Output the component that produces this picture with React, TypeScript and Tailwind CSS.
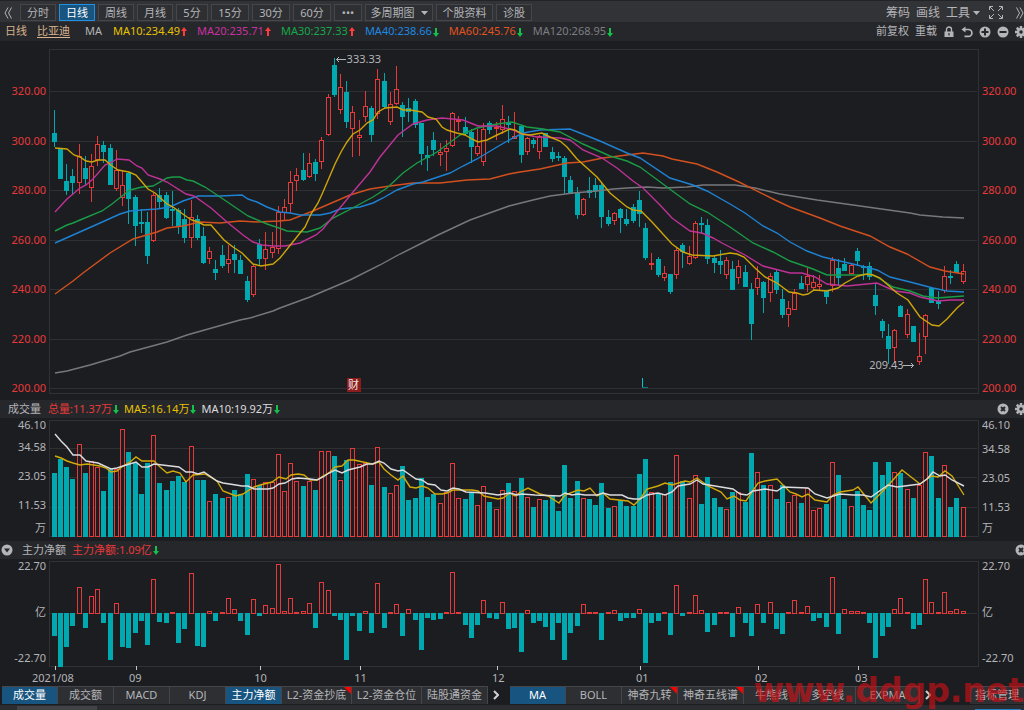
import React from 'react'
import clsx from 'clsx'

// [high, body top, body bottom, low, 1 = rising / 0 = falling]
const candles = [
  [110,133,141,146,0],[148,148,178,178,0],[164,181,190,194,0],[169,176,182,194,0],[144,156,182,193,1],
  [156,168,178,184,0],[154,166,187,201,1],[136,144,159,165,1],[141,145,151,162,0],[144,148,184,184,0],
  [150,170,188,190,1],[171,185,197,205,1],[172,173,198,223,0],[195,197,225,245,0],[209,222,223,232,0],
  [212,222,255,263,0],[193,195,240,241,1],[188,195,201,207,0],[192,195,217,218,0],[191,209,210,225,0],
  [208,210,226,233,0],[209,219,237,242,0],[200,217,237,247,1],[215,219,237,239,0],[227,236,262,263,0],
  [247,251,258,263,1],[260,269,272,279,0],[245,255,265,267,0],[245,259,263,272,1],[245,254,259,272,0],
  [255,260,273,273,0],[276,281,299,301,0],[265,266,294,296,1],[239,244,258,264,0],[232,249,258,269,1],
  [232,247,252,257,1],[206,212,248,253,1],[199,207,212,219,1],[171,182,203,212,1],[168,175,180,190,1],
  [153,170,179,180,0],[153,163,176,177,1],[159,162,173,180,0],[137,140,161,168,1],[94,97,134,135,1],
  [58,65,94,96,0],[74,87,109,113,1],[81,92,121,127,0],[106,112,128,156,1],[120,135,137,155,1],
  [91,106,116,121,1],[106,108,134,141,0],[69,79,113,118,1],[73,81,106,108,0],[92,104,121,124,1],
  [66,89,103,104,1],[102,105,116,136,0],[98,108,111,121,0],[99,101,124,127,0],[123,123,153,164,0],
  [146,155,157,170,0],[132,140,149,155,0],[143,152,154,165,1],[140,148,151,170,1],[112,113,145,146,1],
  [116,120,121,130,1],[117,127,133,134,0],[129,132,146,162,0],[129,146,153,155,1],[123,129,161,165,1],
  [121,123,129,133,0],[122,127,128,139,1],[105,119,129,133,1],[116,122,124,142,0],[112,136,138,138,1],
  [125,126,154,162,0],[137,138,151,154,1],[138,140,143,147,0],[135,136,151,158,1],[133,133,146,146,0],
  [147,152,158,161,0],[152,156,157,160,0],[156,158,176,193,0],[176,180,193,193,0],[187,192,214,218,0],
  [198,199,214,215,1],[177,190,192,197,0],[178,185,190,197,0],[183,185,216,227,0],[210,217,223,225,0],
  [212,213,220,224,1],[208,209,217,232,0],[209,219,223,225,0],[204,207,220,222,0],[191,200,213,226,0],
  [223,228,257,259,0],[253,263,264,269,1],[257,259,274,276,0],[266,273,277,280,1],[274,274,291,293,0],
  [248,250,274,278,1],[243,245,251,267,0],[246,256,263,264,1],[221,223,257,258,1],[217,223,224,233,0],
  [219,225,258,263,0],[255,258,262,272,0],[250,261,264,273,0],[257,260,274,278,1],[261,269,289,289,0],
  [260,266,277,283,1],[265,272,286,286,0],[283,289,323,339,0],[266,278,287,294,1],[281,282,297,312,0],
  [273,276,292,301,1],[269,272,289,293,0],[289,299,314,317,0],[301,308,314,326,1],[289,293,309,309,1],
  [276,283,288,288,0],[268,276,284,291,1],[275,282,287,289,1],[275,284,286,290,1],[290,291,296,303,0],
  [257,260,285,291,1],[259,268,277,285,0],[258,264,270,270,0],[264,265,273,273,1],[248,251,260,265,0],
  [265,266,267,279,0],[262,266,276,279,0],[284,295,305,314,0],[319,321,330,337,0],[324,336,348,363,0],
  [329,330,347,362,1],[305,306,316,316,0],[309,314,334,337,1],[326,326,341,341,0],[333,356,361,364,1],
  [314,315,336,353,1],[287,288,302,302,0],[291,301,303,308,0],[266,276,290,292,1],[270,276,277,283,0],
  [261,264,272,272,0],[264,271,281,283,1],
]

const volumes = [
  473,459,467,479,444,473,461,467,491,469,469,429,452,463,494,463,435,483,490,481,476,482,446,480,480,
  501,494,498,497,490,494,474,479,485,482,482,454,491,463,481,486,481,490,451,451,456,480,460,448,464,
  463,485,447,487,493,485,466,500,498,478,497,494,503,492,463,498,499,492,505,486,502,509,490,483,491,
  478,497,507,499,500,496,511,465,498,481,498,499,505,483,508,506,500,506,506,474,459,492,494,494,482,
  455,481,498,475,504,477,498,507,509,492,492,502,453,472,485,485,499,485,502,495,503,488,510,508,504,
  462,475,499,506,491,505,510,462,475,462,472,473,489,498,485,452,456,498,465,507,498,507,
]

const flows = [
  635,666,646,625,587,627,596,589,622,659,603,646,647,632,620,644,579,621,622,612,642,628,573,645,646,
  611,620,612,598,609,620,634,599,615,605,608,564,611,598,612,611,603,627,582,590,615,619,659,615,630,
  611,632,583,627,612,604,635,609,619,649,617,619,618,612,572,612,624,637,624,600,617,618,602,628,627,
  651,610,622,620,626,639,622,659,632,625,604,612,612,639,612,610,620,617,617,609,662,622,620,612,634,
  585,615,612,595,610,631,624,612,612,636,607,622,635,604,622,602,628,633,612,600,612,606,620,617,626,
  577,633,609,611,611,612,622,657,635,626,609,598,612,628,624,579,602,612,592,611,609,611,
]

const priceLines = [
  { color: '#77787b', points: '55,373 67,371 90,365 120,356 130,352 167,342 187,335 240,320 250,318 273,311 280,308 310,297 350,280 380,265 400,254 430,239 438,235 470,220 509,206 517,204 533,200 550,196 573,193 597,191 613,189 627,188 647,187 663,188 687,187 703,185 735,185 755,188 780,194 817,200 853,205 910,213 920,215 943,217 964,218' },
  { color: '#d2501e', points: '55,294 73,281 83,273 110,253 133,239 157,232 167,228 183,226 200,222 220,223 240,221 257,222 279,221 290,220 313,211 350,195 370,189 390,186 413,183 440,183 467,180 490,179 509,174 520,172 540,169 567,163 583,162 603,158 627,155 643,153 663,156 672,159 697,164 717,172 739,182 775,200 790,207 820,218 840,226 870,236 890,247 907,254 930,267 945,271 964,274' },
  { color: '#1e82d2', points: '55,243 100,223 120,214 130,211 142,210 157,209 170,207 183,201 198,196 220,196 242,195 248,199 257,202 267,207 280,212 290,213 300,215 320,215 330,213 340,209 360,207 373,203 383,198 397,190 413,184 423,182 450,173 463,166 477,159 497,147 509,140 523,133 540,130 570,129 580,133 600,141 627,153 640,158 670,178 693,185 707,191 730,204 745,213 763,226 777,233 790,242 807,251 823,257 857,265 877,270 890,277 910,282 933,288 947,291 964,292' },
  { color: '#1a9b46', points: '55,231 67,225 73,223 80,220 102,211 112,204 122,196 130,190 142,187 153,186 167,178 173,177 180,177 187,180 193,181 205,187 220,197 248,216 267,224 279,228 287,231 307,232 320,228 333,218 347,211 360,204 373,197 387,188 403,173 417,163 437,152 460,135 477,128 497,124 512,122 527,127 543,129 560,132 583,144 610,156 627,161 640,167 667,187 690,204 707,212 730,227 753,243 773,252 790,261 813,269 827,275 857,275 870,274 877,277 893,287 910,291 923,296 937,298 950,297 964,296' },
  { color: '#be3296', points: '55,212 67,199 73,194 80,188 86,185 93,179 105,165 112,162 117,159 129,160 137,166 142,168 148,175 160,179 167,182 186,194 194,196 204,203 211,208 227,222 243,235 253,242 262,245 273,246 285,246 300,243 316,235 323,229 335,214 353,192 370,172 380,157 398,135 413,124 427,120 442,118 463,120 478,126 497,126 513,130 522,134 537,137 560,138 570,140 583,150 602,158 617,168 633,181 643,188 660,205 672,218 690,231 702,233 713,238 722,243 745,255 763,266 790,273 802,273 815,277 827,284 847,286 877,283 895,291 910,293 920,297 938,301 950,300 964,300' },
  { color: '#cda50a', points: '55,148 67,149 74,155 80,157 86,161 92,162 98,160 105,160 112,166 118,170 129,172 136,175 142,182 148,189 155,193 167,204 173,207 180,212 187,217 192,220 198,222 204,225 211,225 217,232 224,240 233,247 242,253 253,264 261,266 273,264 280,258 300,233 305,227 311,214 318,203 323,192 329,178 335,164 341,152 347,142 353,134 360,130 367,123 373,120 378,112 385,108 397,107 403,110 410,110 422,112 428,117 436,119 442,127 447,130 457,133 465,135 472,139 478,142 487,140 497,135 510,129 515,130 522,134 530,135 542,133 550,137 560,141 567,147 577,159 597,177 610,193 627,207 633,210 641,211 652,222 672,244 683,252 692,255 713,256 730,253 737,254 744,257 755,268 765,277 777,283 789,292 797,293 803,295 808,294 814,290 827,291 838,288 845,283 858,276 867,274 873,275 880,278 888,285 897,293 908,300 920,317 932,325 939,326 947,319 957,308 964,302' },
]

const volumeLines = [
  { color: '#d2aa0a', points: '55,456 61,458 67,461 73,463 80,465 87,464 100,466 106,468 111,472 117,471 123,466 129,463 136,457 142,461 154,461 160,467 167,473 173,471 180,473 186,482 193,475 205,474 217,481 223,491 236,496 243,494 254,487 260,485 272,482 279,477 286,479 291,475 298,474 304,475 310,480 317,480 323,476 329,473 335,467 342,466 348,460 354,460 372,464 379,462 384,469 391,475 398,480 403,476 410,487 416,488 422,486 428,488 435,494 442,494 447,493 453,490 472,490 478,491 484,496 498,499 503,498 510,493 515,496 522,491 528,488 540,494 548,496 559,503 565,495 578,490 584,491 590,488 597,496 603,493 610,499 628,501 634,505 640,499 647,489 658,486 665,483 672,485 685,481 690,482 697,478 708,486 721,492 727,499 734,496 740,500 746,501 758,483 765,481 777,479 790,492 796,494 802,497 808,494 815,500 827,502 833,495 840,492 853,490 858,487 871,503 883,491 902,470 920,484 927,479 932,476 938,477 945,471 952,476 964,495' },
  { color: '#dcdcde', points: '55,434 61,441 67,447 73,455 80,455 86,461 98,463 111,469 117,468 123,466 136,462 142,467 148,467 154,464 179,467 186,472 192,472 198,474 204,472 217,481 223,483 236,485 242,486 248,486 254,489 268,489 273,488 279,484 285,483 292,479 298,478 310,479 317,480 323,477 329,473 335,470 342,473 348,470 360,467 367,464 373,464 379,461 384,463 391,469 398,471 403,470 416,479 422,480 428,484 435,485 441,490 447,491 453,488 459,489 466,492 485,493 498,495 510,493 517,495 522,494 535,495 560,496 565,493 572,495 578,494 585,495 597,495 603,493 610,495 622,495 628,498 634,499 640,499 647,495 658,493 665,495 672,492 678,486 690,484 697,480 703,484 715,486 733,489 740,494 747,495 753,491 765,489 777,491 783,487 808,488 815,494 827,498 840,494 853,495 863,495 871,497 888,485 897,487 920,484 927,479 933,472 940,476 945,475 952,480 964,486' },
]

const UP = '#e63a3a'
const DOWN = '#00a8b0'
const GRID = '#2f3034'
const ZERO = 613

const barX = (i: number) => Math.round(51.6 + i * 6.226)

const Arrow = ({ up = false }: { up?: boolean }) => (
  <svg viewBox="0 0 6 10" className={clsx('w-[6px] h-[10px] ml-px shrink-0', up ? 'text-[#ff3b3b]' : 'text-[#12c24a] rotate-180')} aria-hidden="true">
    <path d="M3 0 6 4H4V9H2V4H0Z" fill="currentColor" />
  </svg>
)

const Gear = () => (
  <svg viewBox="0 0 24 24" className="w-3 h-3" aria-hidden="true">
    <g stroke="currentColor" strokeWidth="5">
      <path d="M12 0V24M0 12H24M3.5 3.5 20.5 20.5M20.5 3.5 3.5 20.5" />
    </g>
    <circle cx="12" cy="12" r="8" fill="currentColor" />
    <circle cx="12" cy="12" r="3.5" fill="#26272b" />
  </svg>
)

const Disc = ({ d, fill }: { d: string; fill?: boolean }) => (
  <svg viewBox="0 0 12 12" className="w-3 h-3" aria-hidden="true">
    <circle cx="6" cy="6" r="5.5" fill="currentColor" />
    <path d={d} fill={fill ? '#26272b' : 'none'} stroke="#26272b" strokeWidth={fill ? 0 : 2} />
  </svg>
)

const IconButton = ({ label, className, children }: { label: string; className?: string; children: React.ReactNode }) => (
  <button type="button" aria-label={label} className={clsx('flex items-center justify-center shrink-0', className)}>
    {children}
  </button>
)

const Lines = ({ lines }: { lines: { color: string; points: string }[] }) => (
  <>
    {lines.map((line) => (
      <polyline key={line.color} points={line.points} fill="none" stroke={line.color} strokeWidth="1.4" />
    ))}
  </>
)

const Bar = ({ x, top, bottom, up }: { x: number; top: number; bottom: number; up: boolean }) =>
  up ? (
    <rect x={x + 0.5} y={top + 0.5} width={4} height={Math.max(bottom - top - 1, 1)} fill="#1c1d21" stroke={UP} />
  ) : (
    <rect x={x} y={top} width={5} height={Math.max(bottom - top, 1)} fill={DOWN} />
  )

const periods = [
  { label: '分时', width: 'w-9' },
  { label: '日线', width: 'w-9', active: true },
  { label: '周线', width: 'w-9' },
  { label: '月线', width: 'w-9' },
  { label: '5分', width: 'w-8' },
  { label: '15分', width: 'w-[38px]' },
  { label: '30分', width: 'w-[38px]' },
  { label: '60分', width: 'w-[38px]' },
  { label: '•••', width: 'w-7' },
  { label: '多周期图', width: 'w-[68px]', menu: true },
  { label: '个股资料', width: 'w-[57px]' },
  { label: '诊股', width: 'w-9' },
]

const averages = [
  { text: 'MA10:234.49', color: 'text-[#e6c200]', up: true },
  { text: 'MA20:235.71', color: 'text-[#c832a0]', up: true },
  { text: 'MA30:237.33', color: 'text-[#18a84a]', up: true },
  { text: 'MA40:238.66', color: 'text-[#1e88e0]', up: false },
  { text: 'MA60:245.76', color: 'text-[#e0531e]', up: false },
  { text: 'MA120:268.95', color: 'text-[#7d7e82]', up: false },
]

const months = [
  { label: '09', sessions: 20 },
  { label: '10', sessions: 16 },
  { label: '11', sessions: 22 },
  { label: '12', sessions: 23 },
  { label: '01', sessions: 19 },
  { label: '02', sessions: 16 },
  { label: '03', sessions: 27 },
]

const subTabs = [
  { label: '成交量', width: 'w-14', active: true },
  { label: '成交额', width: 'w-14' },
  { label: 'MACD', width: 'w-14' },
  { label: 'KDJ', width: 'w-14' },
  { label: '主力净额', width: 'w-14', active: true },
  { label: 'L2-资金抄底', width: 'w-[70px]', isNew: true },
  { label: 'L2-资金仓位', width: 'w-[70px]' },
  { label: '陆股通资金', width: 'w-[66px]' },
]

const mainTabs = [
  { label: 'MA', width: 'w-14', active: true },
  { label: 'BOLL', width: 'w-14' },
  { label: '神奇九转', width: 'w-14', isNew: true },
  { label: '神奇五线谱', width: 'w-[66px]', isNew: true },
  { label: '牛熊线', width: 'w-14' },
  { label: '多空线', width: 'w-14' },
  { label: 'EXPMA', width: 'w-16' },
]

type TabItem = { label: string; width: string; active?: boolean; isNew?: boolean }

const Tabs = ({ items }: { items: TabItem[] }) => (
  <>
    {items.map((tab) => (
      <button
        key={tab.label}
        type="button"
        className={clsx(
          'relative h-[18px] shrink-0 border-r border-t border-[#45464a] text-center whitespace-nowrap',
          tab.width,
          tab.active ? 'bg-[#17547f] text-white' : 'bg-[#2e2f33] text-[#b4b5b8]'
        )}
      >
        {tab.label}
        {tab.isNew && (
          <svg viewBox="0 0 7 7" className="absolute top-0 right-0 w-[7px] h-[7px]" aria-hidden="true">
            <path d="M0 0H7V7Z" fill="#ff0000" />
          </svg>
        )}
      </button>
    ))}
    <IconButton label="更多指标" className="w-4 h-[18px] text-[#d0d0d2]">
      <svg viewBox="0 0 6 10" className="w-[6px] h-[10px]" aria-hidden="true">
        <path d="M1 1 5 5 1 9" fill="none" stroke="currentColor" strokeWidth="2" />
      </svg>
    </IconButton>
  </>
)

const prices = ['320.00', '300.00', '280.00', '260.00', '240.00', '220.00', '200.00']

const PriceChart = () => (
  <section className="grid grid-cols-[49px_1fr_45px] h-[357px] text-[#e63a3a]">
    <div className="flex flex-col justify-between items-end pt-[42px] pb-[2px] pr-[3px] leading-4">
      {prices.map((price) => <span key={price}>{price}</span>)}
    </div>
    <div className="relative">
      <svg viewBox="49 41 930 357" preserveAspectRatio="none" className="block w-full h-[357px]" role="img" aria-label="日线K线图">
        <path d="M49 49.5H978M49 393.5H978M49.5 49V394M978.5 49V394" stroke="#303135" fill="none" />
        {[91, 141, 190, 240, 289, 339, 388].map((y) => (
          <path key={y} d={`M50 ${y + 0.5}H977`} stroke={GRID} />
        ))}
        {candles.map(([high, top, bottom, low, up], i) => (
          <g key={i}>
            <path d={`M${barX(i) + 2.5} ${high}V${low + 1}`} stroke={up ? UP : DOWN} />
            <Bar x={barX(i)} top={top} bottom={bottom + 1} up={up === 1} />
          </g>
        ))}
        <Lines lines={priceLines} />
        <path d="M346 59.5H336.5M339 57 336.5 59.5 339 62M903 365.5H913.5M911 363 913.5 365.5 911 368" fill="none" stroke="#b4b5b8" />
        <path d="M642.5 378V388" stroke="#00c8d2" />
        <path d="M642 387.5H648" stroke="#0a7a80" />
      </svg>
      <span className="absolute top-[10px] left-[32%] leading-4 text-[#b4b5b8]">333.33</span>
      <span className="absolute top-[316px] right-[8.1%] leading-4 text-[#b4b5b8]">209.43</span>
      <button type="button" className="absolute top-[337px] left-[32%] w-[14px] h-[14px] leading-[14px] bg-[#8c1c1c] text-[#f0e6e6]">财</button>
    </div>
    <div className="flex flex-col justify-between pt-[42px] pb-[2px] pl-[3px] leading-4">
      {prices.map((price) => <span key={price}>{price}</span>)}
    </div>
  </section>
)

const VolumeChart = () => (
  <section className="grid grid-cols-[49px_1fr_45px] h-[123px] text-[#b4b5b8]">
    <div className="flex flex-col items-end pr-[3px] leading-4">
      <span className="leading-[14px]">46.10</span>
      <span className="mt-[7px]">34.58</span>
      <span className="mt-[13px]">23.05</span>
      <span className="mt-[13px]">11.53</span>
      <span className="mt-[7px]">万</span>
    </div>
    <svg viewBox="49 418 930 123" preserveAspectRatio="none" className="block w-full h-[123px]" role="img" aria-label="成交量">
      <path d="M49 420.5H978M49 536.5H978M49.5 420V537M978.5 420V537" stroke="#303135" fill="none" />
      <path d="M50 448.5H977M50 477.5H977M50 507.5H977" stroke={GRID} />
      {volumes.map((top, i) => (
        <Bar key={i} x={barX(i)} top={top} bottom={537} up={candles[i][4] === 1} />
      ))}
      <Lines lines={volumeLines} />
    </svg>
    <div className="flex flex-col pl-[3px] leading-4">
      <span className="leading-[14px]">46.10</span>
      <span className="mt-[9px]">34.58</span>
      <span className="mt-[13px]">23.05</span>
      <span className="mt-[13px]">11.53</span>
      <span className="mt-[5px]">万</span>
    </div>
  </section>
)

const FlowChart = () => (
  <section className="grid grid-cols-[49px_1fr_45px] h-[112px] text-[#b4b5b8]">
    <div className="flex flex-col justify-between items-end pr-[3px] pb-[6px] leading-[14px]">
      <span>22.70</span>
      <span>亿</span>
      <span>-22.70</span>
    </div>
    <svg viewBox="49 559 930 112" preserveAspectRatio="none" className="block w-full h-[112px]" role="img" aria-label="主力净额">
      <path d="M49 561.5H978M49 666.5H978M49.5 561V667M978.5 561V667" stroke="#303135" fill="none" />
      <path d="M50 613.5H977" stroke={GRID} />
      {flows.map((y, i) => (
        <Bar key={i} x={barX(i)} top={Math.min(y, ZERO)} bottom={y < ZERO ? ZERO + 1 : y + 1} up={y < ZERO} />
      ))}
      <path d="M55.5 666V670M136.5 666V670M260.5 666V670M360.5 666V670M497.5 666V670M640.5 666V670M758.5 666V670M858.5 666V670" stroke="#c8c8ca" />
    </svg>
    <div className="flex flex-col justify-between pl-[3px] pb-[6px] leading-[14px]">
      <span>22.70</span>
      <span>亿</span>
      <span>-22.70</span>
    </div>
  </section>
)

const App = () => {
  return (
    <div className="relative w-full overflow-hidden bg-[#1c1d21] text-[11px] font-['Noto_Sans','Noto_Sans_CJK_SC',sans-serif] text-[#b4b5b8] whitespace-nowrap">
      <header className="flex items-center h-[22px] pt-[2px] border-t border-[#222327] bg-[#323337]">
        <IconButton label="收起" className="w-5">
          <svg viewBox="0 0 8 12" className="w-2 h-3 -ml-1" aria-hidden="true">
            <path d="M4 0.5 1 6 4 11.5M7.5 0.5 4.5 6 7.5 11.5" fill="none" stroke="currentColor" />
          </svg>
        </IconButton>
        <nav className="flex gap-[3px]">
          {periods.map((item) => (
            <button
              key={item.label}
              type="button"
              className={clsx(
                'flex items-center justify-center gap-[6px] h-[17px] border leading-none',
                item.width,
                item.active ? 'border-[#2090e0] bg-[#17547f] text-white' : 'border-[#46474b] bg-[#2e2f33]'
              )}
            >
              {item.label}
              {item.menu && (
                <svg viewBox="0 0 7 4" className="w-[7px] h-1" aria-hidden="true">
                  <path d="M0 0H7L3.5 4Z" fill="currentColor" />
                </svg>
              )}
            </button>
          ))}
        </nav>
        <div className="flex items-center ml-auto gap-[6px] text-xs leading-none">
          <button type="button">筹码</button>
          <button type="button">画线</button>
          <button type="button" className="flex items-center gap-[3px]">
            工具
            <svg viewBox="0 0 7 4" className="w-[7px] h-1" aria-hidden="true">
              <path d="M0 0H7L3.5 4Z" fill="currentColor" />
            </svg>
          </button>
          <IconButton label="全屏" className="w-[14px] ml-[3px]">
            <svg viewBox="0 0 14 13" className="w-[14px] h-[13px]" aria-hidden="true">
              <path d="M.5 4V.5H4M10 .5H13.5V4M13.5 9V12.5H10M4 12.5H.5V9M1 1 5 5M13 1 9 5M13 12 9 8M1 12 5 8" fill="none" stroke="currentColor" />
            </svg>
          </IconButton>
          <IconButton label="展开" className="w-2 ml-[7px]">
            <svg viewBox="0 0 8 12" className="w-2 h-3" aria-hidden="true">
              <path d="M.5 .5 3.5 6 .5 11.5M4 .5 7 6 4 11.5" fill="none" stroke="currentColor" />
            </svg>
          </IconButton>
        </div>
      </header>

      <div className="flex items-center h-[19px] pl-[5px] bg-[#26272b]">
        <span className="text-[#d9b38c]">日线</span>
        <a href="#stock" className="ml-[10px] underline underline-offset-2 text-[#d9b38c]">比亚迪</a>
        <span className="ml-[15px]">MA</span>
        <div className="flex gap-[10px] ml-[11px]">
          {averages.map((ma) => (
            <span key={ma.text} className={clsx('flex items-center', ma.color)}>
              {ma.text}
              <Arrow up={ma.up} />
            </span>
          ))}
        </div>
        <div className="flex items-center ml-auto -mr-[3px] gap-[6px]">
          <button type="button">前复权</button>
          <button type="button">重载</button>
          <IconButton label="锁定" className="w-3">
            <svg viewBox="0 0 12 12" className="w-3 h-3" aria-hidden="true">
              <path d="M3.5 6V3.5A2.5 2.5 0 0 1 8.5 3.5V6" fill="none" stroke="currentColor" strokeWidth="1.4" />
              <path d="M1.5 5.5H10.5V11H1.5Z" fill="currentColor" />
              <path d="M5.4 7H6.6V9.5H5.4Z" fill="#26272b" />
            </svg>
          </IconButton>
          <IconButton label="撤销" className="w-3">
            <svg viewBox="0 0 12 12" className="w-3 h-3" aria-hidden="true">
              <path d="M3 3.5H7.5A3.4 3.4 0 0 1 7.5 10.3H3.5" fill="none" stroke="currentColor" strokeWidth="1.7" />
              <path d="M0.5 3.5 4.5 0.5V6.5Z" fill="currentColor" />
            </svg>
          </IconButton>
          <IconButton label="放大" className="w-3"><Disc d="M6 2.5V9.5M2.5 6H9.5" /></IconButton>
          <IconButton label="缩小" className="w-3"><Disc d="M2.5 6H9.5" /></IconButton>
          <IconButton label="设置" className="w-3"><Gear /></IconButton>
        </div>
      </div>

      <PriceChart />

      <div className="flex items-center h-5 pl-2 border-t-2 border-[#1c1d21] bg-[#26272b]">
        <span>成交量</span>
        <span className="flex items-center ml-[7px] text-[#e63a3a]">总量:11.37万<Arrow /></span>
        <span className="flex items-center ml-[5px] text-[#e6c200]">MA5:16.14万<Arrow /></span>
        <span className="flex items-center ml-[5px] text-[#dcdcde]">MA10:19.92万<Arrow /></span>
        <div className="flex items-center ml-auto -mr-[3px] gap-[6px]">
          <IconButton label="关闭成交量" className="w-3"><Disc d="M4 4 8 8M8 4 4 8" /></IconButton>
          <IconButton label="成交量设置" className="w-3"><Gear /></IconButton>
        </div>
      </div>

      <VolumeChart />

      <div className="flex items-center h-[18px] pl-px bg-[#26272b]">
        <IconButton label="指标菜单" className="w-3"><Disc d="M3 4.5H9L6 8.5Z" fill /></IconButton>
        <span className="ml-[9px]">主力净额</span>
        <span className="flex items-center ml-[6px] text-[#e63a3a]">主力净额:1.09亿<Arrow /></span>
        <IconButton label="关闭主力净额" className="w-3 ml-auto -mr-[3px]"><Disc d="M4 4 8 8M8 4 4 8" /></IconButton>
      </div>

      <FlowChart />

      <div className="flex h-[14px] pl-8 leading-[14px]">
        <span className="w-[97px] shrink-0">2021/08</span>
        {months.map((month) => (
          <span key={month.label} className="basis-0" style={{ flexGrow: month.sessions }}>{month.label}</span>
        ))}
      </div>

      <footer>
        <div className="flex items-center h-[19px] pl-[2px] leading-4">
          <Tabs items={subTabs} />
          <div className="w-[6px] shrink-0" />
          <Tabs items={mainTabs} />
          <button type="button" className="ml-auto w-[54px] h-[18px] shrink-0 border-t border-[#45464a] bg-[#2e2f33] text-center">指标管理</button>
        </div>
        <div className="flex h-[6px] pl-[17px] border-t border-[#1c1d21] bg-[#2c2d31]">
          <div className="w-20 mt-px bg-[#424347]" />
          <div className="w-[46px] h-px mt-1 ml-auto mr-[3px] bg-[#2080c8]" />
        </div>
      </footer>

      <div className="absolute right-0 bottom-0 pointer-events-none font-['DejaVu_Sans',sans-serif] font-bold text-[33px] leading-[38px] text-[#d20f14]/65">
        www.ddgp.net
      </div>
    </div>
  )
}

export default App
